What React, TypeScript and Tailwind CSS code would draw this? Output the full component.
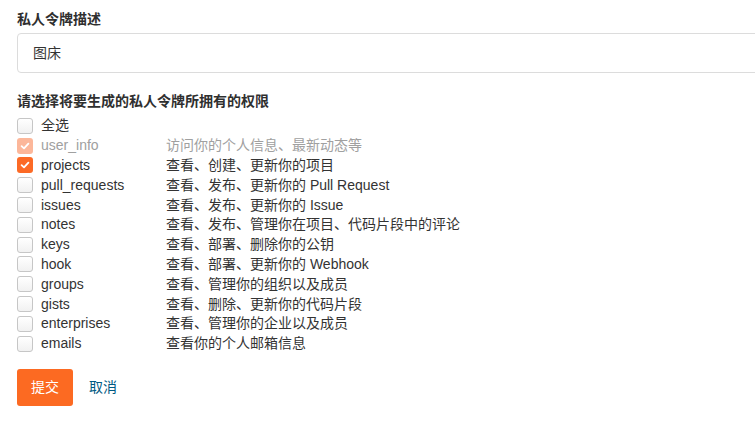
import React from "react";

type Perm = { name: string; desc: string; checked?: boolean; disabled?: boolean };

const perms: Perm[] = [
  { name: "user_info", desc: "访问你的个人信息、最新动态等", checked: true, disabled: true },
  { name: "projects", desc: "查看、创建、更新你的项目", checked: true },
  { name: "pull_requests", desc: "查看、发布、更新你的 Pull Request" },
  { name: "issues", desc: "查看、发布、更新你的 Issue" },
  { name: "notes", desc: "查看、发布、管理你在项目、代码片段中的评论" },
  { name: "keys", desc: "查看、部署、删除你的公钥" },
  { name: "hook", desc: "查看、部署、更新你的 Webhook" },
  { name: "groups", desc: "查看、管理你的组织以及成员" },
  { name: "gists", desc: "查看、删除、更新你的代码片段" },
  { name: "enterprises", desc: "查看、管理你的企业以及成员" },
  { name: "emails", desc: "查看你的个人邮箱信息" },
];

function Box({ checked, disabled }: { checked?: boolean; disabled?: boolean }) {
  if (checked) {
    return (
      <span
        className={
          "flex h-4 w-4 shrink-0 items-center justify-center rounded-[3px] " +
          (disabled ? "bg-[#fcb79a]" : "bg-[#fc6a26]")
        }
      >
        <svg width="10" height="10" viewBox="0 0 10 10" fill="none">
          <path d="M1.6 5.2 L4 7.4 L8.4 2.6" stroke="white" strokeWidth="1.8" strokeLinecap="round" strokeLinejoin="round" />
        </svg>
      </span>
    );
  }
  return (
    <span className="block h-4 w-4 shrink-0 rounded-[3px] border border-[#c6c6c6] bg-gradient-to-b from-white to-[#f1f1f1]" />
  );
}

export default function App() {
  return (
    <div
      className="h-[423px] w-[755px] overflow-hidden bg-white pl-[17px] text-[14px] text-[#333]"
      style={{ fontFamily: '"Liberation Sans", "Noto Sans CJK SC", sans-serif' }}
    >
      <div className="pt-[9px] text-[14px] font-bold leading-[20px] text-[#2f2f2f]">私人令牌描述</div>
      <div className="mt-1 flex h-[40px] w-[800px] items-center rounded-[4px] border border-[#dcdcdc] pl-[15px] text-[14px] text-[#333]">
        图床
      </div>
      <div className="mt-[18px] text-[14px] font-bold leading-[20px] text-[#2f2f2f]">请选择将要生成的私人令牌所拥有的权限</div>
      <div className="mt-[5px] flex flex-col">
        <div className="flex h-[19.8px] items-center">
          <Box />
          <span className="ml-[8px] text-[#333]">全选</span>
        </div>
        {perms.map((p) => (
          <div key={p.name} className="flex h-[19.8px] items-center">
            <Box checked={p.checked} disabled={p.disabled} />
            <span className={"ml-[8px] w-[125px] " + (p.disabled ? "text-[#a0a0a0]" : "text-[#333]")}>{p.name}</span>
            <span className={p.disabled ? "text-[#a0a0a0]" : "text-[#333]"}>{p.desc}</span>
          </div>
        ))}
      </div>
      <div className="mt-[15px] flex items-center">
        <button className="flex h-[37px] w-[56px] items-center justify-center rounded-[3px] bg-[#fc6a22] text-[14px] text-white">
          提交
        </button>
        <span className="ml-[16px] text-[14px] text-[#005a82]">取消</span>
      </div>
    </div>
  );
}
